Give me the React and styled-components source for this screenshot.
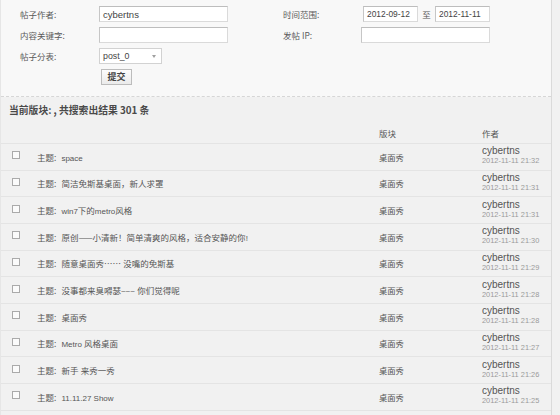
import React from "react";
import styled, { createGlobalStyle } from "styled-components";

const Global = createGlobalStyle`
  html, body { margin: 0; padding: 0; background: #f1f1f1; }
  body { font-family: "Liberation Sans", "Noto Sans CJK SC", sans-serif; font-size: 8.5px; color: #555; }
`;

const Page = styled.div`
  width: 552px;
  min-height: 415px;
  border-left: 1px solid #e6e6e6;
  border-right: 1px solid #dadada;
  box-sizing: border-box;
  overflow: hidden;
`;

const FormPanel = styled.div`
  background: #f8f8f8;
  border-bottom: 1px dashed #d6d6d6;
  height: 97px;
  box-sizing: border-box;
  padding: 6px 0 0 0;
`;

const FormGrid = styled.div`
  display: grid;
  grid-template-columns: 262px 1fr;
  row-gap: 5px;
`;

const Field = styled.div`
  display: flex;
  align-items: center;
  height: 16px;
  padding-left: ${(p) => p.$indent}px;
`;

const Label = styled.span`
  width: ${(p) => p.$w}px;
  flex: none;
  font-family: "Noto Sans CJK SC", sans-serif;
  color: #5a5a5a;
  font-size: 8.5px;
`;

const Input = styled.div`
  width: ${(p) => p.$w}px;
  height: 16px;
  box-sizing: border-box;
  background: #fff;
  border: 1px solid #dadada;
  border-top-color: #bdbdbd;
  border-left-color: #c6c6c6;
  padding: 0 3px;
  display: flex;
  align-items: center;
  font-family: "Liberation Sans", sans-serif;
  font-size: ${(p) => p.$fs || 9.5}px;
  color: #444;
`;

const Sep = styled.span`
  width: 17px;
  text-align: center;
  font-family: "Noto Sans CJK SC", sans-serif;
  font-size: 8.5px;
  color: #555;
`;

const Select = styled(Input)`
  justify-content: space-between;
  border-color: #d2d2d2;
  padding-right: 5px;
`;

const Caret = styled.span`
  width: 0;
  height: 0;
  border-left: 2.5px solid transparent;
  border-right: 2.5px solid transparent;
  border-top: 3px solid #a0a0a0;
`;

const ButtonRow = styled.div`
  padding-left: 100px;
  margin-top: 5px;
  display: flex;
`;

const Button = styled.button`
  width: 31px;
  height: 16px;
  padding: 0;
  border: 1px solid #bcbcbc;
  background: linear-gradient(#fcfcfc, #ebebeb);
  font-family: "Noto Sans CJK SC", sans-serif;
  font-size: 9px;
  font-weight: bold;
  color: #444;
  line-height: 14px;
`;

const Heading = styled.div`
  padding: 6px 0 0 8px;
  height: 25px;
  box-sizing: border-box;
  font-family: "Noto Sans CJK SC", sans-serif;
  font-weight: bold;
  font-size: 9.8px;
  color: #4a4a4a;
  line-height: 14px;
  white-space: nowrap;
`;

const Table = styled.div`
  width: 550px;
`;

const HeaderRow = styled.div`
  display: grid;
  grid-template-columns: 378px 103px 1fr;
  height: 21px;
  align-items: center;
  border-bottom: 1px solid #e4e4e4;
  font-family: "Noto Sans CJK SC", sans-serif;
  font-size: 8.5px;
  color: #555;
`;

const Row = styled.div`
  display: grid;
  grid-template-columns: 36px 342px 103px 1fr;
  height: 26.67px;
  align-items: center;
  border-bottom: 1px solid #e4e4e4;
  box-sizing: border-box;
`;

const Check = styled.span`
  width: 6px;
  height: 6px;
  border: 1px solid #aaa;
  background: #fbfbfb;
  margin-left: 11px;
  margin-top: -3px;
`;

const Title = styled.span`
  font-family: "Noto Sans CJK SC", sans-serif;
  font-size: 8.5px;
  color: #555;
  white-space: nowrap;
`;

const Lat = styled.span`
  font-family: "Liberation Sans", sans-serif;
  font-size: 8px;
`;

const Prefix = styled.span`
  margin-right: 5px;
`;

const Board = styled.span`
  font-family: "Noto Sans CJK SC", sans-serif;
  font-size: 8.3px;
  color: #555;
`;

const Author = styled.div`
  display: flex;
  flex-direction: column;
  line-height: 10px;
  margin-top: -1px;
`;

const Name = styled.span`
  font-family: "Liberation Sans", sans-serif;
  font-size: 10px;
  color: #555;
`;

const Time = styled.span`
  font-family: "Liberation Sans", sans-serif;
  font-size: 7.4px;
  color: #9a9a9a;
`;

const rows = [
  ["space", "21:32"],
  ["简洁免斯基桌面，新人求罩", "21:31"],
  ["win7下的metro风格", "21:31"],
  ["原创——小清新！简单清爽的风格，适合安静的你!", "21:30"],
  ["随意桌面秀…… 没嘴的免斯基", "21:29"],
  ["没事都来臭嘚瑟~~~ 你们觉得呢", "21:28"],
  ["桌面秀", "21:28"],
  ["Metro 风格桌面", "21:27"],
  ["新手 来秀一秀", "21:26"],
  ["11.11.27 Show", "21:25"],
];

function Mixed({ text }) {
  return text
    .split(/([\x20-\x7E]+)/)
    .filter(Boolean)
    .map((part, i) =>
      /^[\x20-\x7E]+$/.test(part) ? <Lat key={i}>{part}</Lat> : <span key={i}>{part}</span>
    );
}

export default function App() {
  return (
    <>
      <Global />
      <Page>
        <FormPanel>
          <FormGrid>
            <Field $indent={19}>
              <Label $w={79}>帖子作者:</Label>
              <Input $w={129}>cybertns</Input>
            </Field>
            <Field $indent={20}>
              <Label $w={80}>时间范围:</Label>
              <Input $w={55} $fs={8.4}>2012-09-12</Input>
              <Sep>至</Sep>
              <Input $w={55} $fs={8.4}>2012-11-11</Input>
            </Field>
            <Field $indent={19}>
              <Label $w={79}>内容关键字:</Label>
              <Input $w={129} />
            </Field>
            <Field $indent={20}>
              <Label $w={78}>发帖 IP:</Label>
              <Input $w={129} />
            </Field>
            <Field $indent={19}>
              <Label $w={79}>帖子分表:</Label>
              <Select $w={63} $fs={8.8}>
                post_0
                <Caret />
              </Select>
            </Field>
            <div />
          </FormGrid>
          <ButtonRow>
            <Button>提交</Button>
          </ButtonRow>
        </FormPanel>
        <Heading>当前版块: , 共搜索出结果 301 条</Heading>
        <Table>
          <HeaderRow>
            <span />
            <span>版块</span>
            <span>作者</span>
          </HeaderRow>
          {rows.map(([t, tm], i) => (
            <Row key={i}>
              <Check />
              <Title>
                <Prefix>主题:</Prefix>
                <Mixed text={t} />
              </Title>
              <Board>桌面秀</Board>
              <Author>
                <Name>cybertns</Name>
                <Time>2012-11-11 {tm}</Time>
              </Author>
            </Row>
          ))}
        </Table>
      </Page>
    </>
  );
}
